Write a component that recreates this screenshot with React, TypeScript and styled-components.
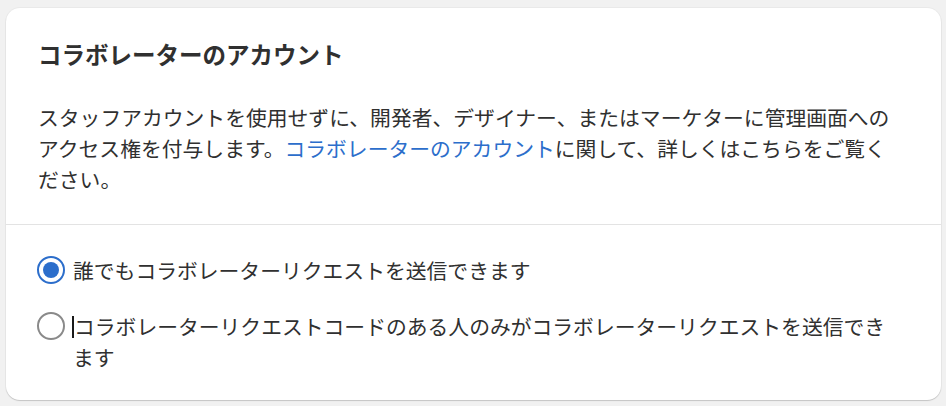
import React, { useState } from 'react';
import styled, { createGlobalStyle } from 'styled-components';

const GlobalStyle = createGlobalStyle`
  html, body {
    margin: 0;
    padding: 0;
    background: #f1f1f1;
  }
  body {
    font-family: "Noto Sans CJK JP", "Noto Sans", sans-serif;
    color: #303030;
  }
`;

const Page = styled.div`
  padding: 8px 5px 6px 6px;
`;

const Card = styled.section`
  background: #ffffff;
  border-radius: 14px;
  box-shadow: 0 1px 1px rgba(0, 0, 0, 0.16), 0 0 0 1px rgba(0, 0, 0, 0.03);
  overflow: hidden;
`;

const Section = styled.div<{ $top: number; $bottom: number }>`
  padding: ${(p) => p.$top}px 40px ${(p) => p.$bottom}px 32px;
`;

const Divider = styled.hr`
  margin: 0;
  border: none;
  border-top: 1px solid #e3e3e3;
`;

const Title = styled.h2`
  margin: 0;
  font-size: 23.5px;
  line-height: 32px;
  font-weight: 700;
  color: #303030;
`;

const Description = styled.p`
  margin: 32px 0 0 0;
  font-size: 20.8px;
  line-height: 31px;
  color: #303030;
`;

const TextLink = styled.a`
  color: #2c6ecb;
  text-decoration: none;
`;

const Options = styled.div`
  display: flex;
  flex-direction: column;
  gap: 25px;
`;

const Option = styled.label`
  display: flex;
  align-items: flex-start;
  gap: 8px;
  cursor: pointer;
`;

const RadioCircle = styled.span<{ $checked: boolean }>`
  flex: none;
  position: relative;
  box-sizing: border-box;
  width: 28px;
  height: 28px;
  margin: 1px 0 0 -1px;
  border-radius: 50%;
  border: ${(p) => (p.$checked ? '2.5px solid #2c6ecb' : '2px solid #8a8a8a')};
  background: #ffffff;
  &::after {
    content: '';
    display: ${(p) => (p.$checked ? 'block' : 'none')};
    position: absolute;
    inset: 4px;
    border-radius: 50%;
    background: #2c6ecb;
  }
`;

const OptionText = styled.span`
  font-size: 20.8px;
  line-height: 31px;
  color: #303030;
`;

const Caret = styled.span`
  display: inline-block;
  width: 2px;
  height: 22px;
  margin: 0 0 0 -1px;
  vertical-align: -3px;
  background: #1a1a1a;
`;

const options = [
  '誰でもコラボレーターリクエストを送信できます',
  'コラボレーターリクエストコードのある人のみがコラボレーターリクエストを送信できます',
];

const App = () => {
  const [selected, setSelected] = useState(0);
  return (
    <Page>
      <GlobalStyle />
      <Card>
        <Section $top={30} $bottom={29}>
          <Title>コラボレーターのアカウント</Title>
          <Description>
            スタッフアカウントを使用せずに、開発者、デザイナー、またはマーケターに管理画面へのアクセス権を付与します。
            <TextLink href="#">コラボレーターのアカウント</TextLink>
            に関して、詳しくはこちらをご覧ください。
          </Description>
        </Section>
        <Divider />
        <Section $top={30} $bottom={27}>
          <Options>
            {options.map((label, i) => (
              <Option key={i} onClick={() => setSelected(i)}>
                <RadioCircle $checked={selected === i} />
                <OptionText>
                  {i === 1 ? <Caret /> : null}
                  {label}
                </OptionText>
              </Option>
            ))}
          </Options>
        </Section>
      </Card>
    </Page>
  );
};

export default App;
